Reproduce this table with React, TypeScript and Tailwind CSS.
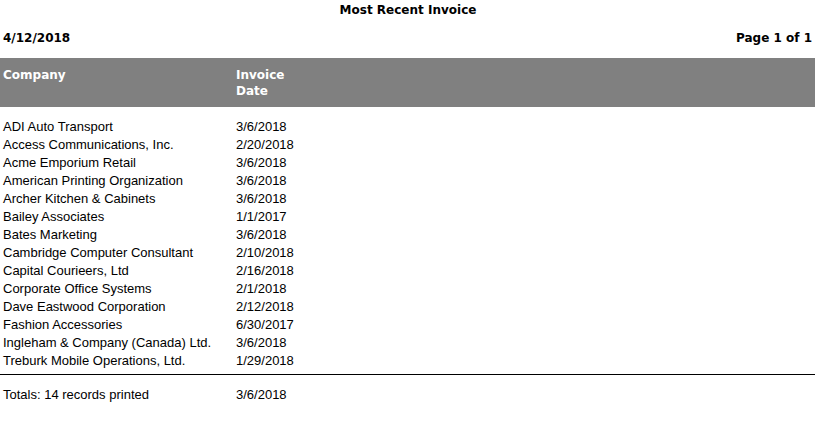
import React from "react";

const rows: [string, string][] = [
  ["ADI Auto Transport", "3/6/2018"],
  ["Access Communications, Inc.", "2/20/2018"],
  ["Acme Emporium Retail", "3/6/2018"],
  ["American Printing Organization", "3/6/2018"],
  ["Archer Kitchen & Cabinets", "3/6/2018"],
  ["Bailey Associates", "1/1/2017"],
  ["Bates Marketing", "3/6/2018"],
  ["Cambridge Computer Consultant", "2/10/2018"],
  ["Capital Courieers, Ltd", "2/16/2018"],
  ["Corporate Office Systems", "2/1/2018"],
  ["Dave Eastwood Corporation", "2/12/2018"],
  ["Fashion Accessories", "6/30/2017"],
  ["Ingleham & Company (Canada) Ltd.", "3/6/2018"],
  ["Treburk Mobile Operations, Ltd.", "1/29/2018"],
];

export default function App() {
  return (
    <div className="w-[815px] h-[427px] bg-white text-black overflow-hidden font-['DejaVu_Sans',Verdana,sans-serif]">
      <div className="h-[20px] flex items-center justify-center text-[12px] font-bold pl-[1px]">
        Most Recent Invoice
      </div>
      <div className="h-[38px] flex items-center justify-between px-[3px] text-[12px] font-bold pb-[2px]">
        <span>4/12/2018</span>
        <span>Page 1 of 1</span>
      </div>
      <div className="h-[49px] bg-[#808080] text-white text-[12px] font-bold flex pt-[9px] leading-[16px]">
        <div className="w-[236px] pl-[3px]">Company</div>
        <div>
          Invoice
          <br />
          Date
        </div>
      </div>
      <div className="pt-[11px] text-[13px] font-['Liberation_Sans',Arial,sans-serif]">
        {rows.map(([c, d]) => (
          <div key={c} className="h-[18px] flex items-center">
            <div className="w-[236px] pl-[3px]">{c}</div>
            <div>{d}</div>
          </div>
        ))}
      </div>
      <div className="mt-[4px] h-px bg-black" />
      <div className="mt-[11px] h-[18px] flex items-center text-[13px] font-['Liberation_Sans',Arial,sans-serif]">
        <div className="w-[236px] pl-[3px]">Totals: 14 records printed</div>
        <div>3/6/2018</div>
      </div>
    </div>
  );
}
